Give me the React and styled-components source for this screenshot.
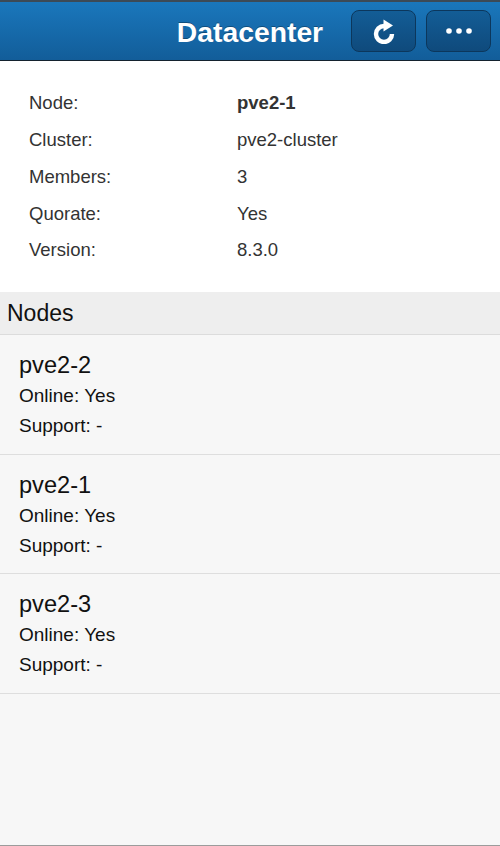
import React from "react";
import styled, { createGlobalStyle } from "styled-components";

const GlobalStyle = createGlobalStyle`
  html, body {
    margin: 0;
    padding: 0;
    background: #f7f7f7;
    font-family: "Liberation Sans", Arial, sans-serif;
    color: #1a1a1a;
  }
`;

const Page = styled.div`
  display: flex;
  flex-direction: column;
  height: 846px;
  width: 500px;
  overflow: hidden;
  box-sizing: border-box;
  border-bottom: 1px solid #9c9c9c;
`;

const Toolbar = styled.header`
  box-sizing: border-box;
  display: flex;
  align-items: flex-start;
  justify-content: flex-end;
  gap: 10px;
  height: 61px;
  padding: 8px 9px 0 0;
  position: relative;
  background: linear-gradient(#1a77bc, #125d99);
  border-top: 2px solid #3c4a57;
  border-bottom: 1px solid #14222e;
`;

const Title = styled.h1`
  position: absolute;
  left: 0;
  right: 0;
  top: 13px;
  margin: 0;
  text-align: center;
  font-size: 28.3px;
  line-height: 34px;
  font-weight: 700;
  color: #fff;
  text-shadow: 0 -1px 0 rgba(0, 0, 0, 0.3);
`;

const ToolButton = styled.button`
  box-sizing: border-box;
  display: flex;
  align-items: center;
  justify-content: center;
  width: 65px;
  height: 42px;
  padding: 0;
  border: 1px solid #0c375c;
  border-radius: 8px;
  background: linear-gradient(#135d96, #0f4a7c);
`;

const Info = styled.section`
  background: #fff;
  padding: 24px 29px 23.25px;
  display: grid;
  grid-template-columns: 208px 1fr;
  grid-auto-rows: 36.75px;
  align-items: center;
  font-size: 18.5px;
  color: #333;
`;

const Value = styled.span`
  font-weight: ${(p) => (p.$strong ? 700 : 400)};
`;

const SectionHeader = styled.div`
  box-sizing: border-box;
  height: 43px;
  padding-left: 7px;
  display: flex;
  align-items: center;
  background: #eee;
  border-bottom: 1px solid #dcdcdc;
  font-size: 23px;
  color: #111;
`;

const NodeItem = styled.div`
  box-sizing: border-box;
  height: 119.7px;
  padding: 15px 19px 0;
  border-bottom: 1px solid #dedede;
`;

const NodeName = styled.div`
  font-size: 23.6px;
  line-height: 30px;
  margin-bottom: 1px;
  color: #111;
`;

const NodeLine = styled.div`
  font-size: 19px;
  line-height: 30px;
  color: #111;
`;

const nodes = ["pve2-2", "pve2-1", "pve2-3"];

const info = [
  ["Node:", "pve2-1", true],
  ["Cluster:", "pve2-cluster"],
  ["Members:", "3"],
  ["Quorate:", "Yes"],
  ["Version:", "8.3.0"],
];

const RefreshIcon = () => (
  <svg width="24" height="26" viewBox="0 0 24 26">
    <path
      d="M12 8 A8 8 0 1 0 20 16"
      fill="none"
      stroke="#fff"
      strokeWidth="4.4"
    />
    <path d="M11.5 1.5 L21 7.5 L11.5 13.5 Z" fill="#fff" />
  </svg>
);

const DotsIcon = () => (
  <svg width="26" height="6" viewBox="0 0 26 6">
    <circle cx="3" cy="3" r="2.8" fill="#fff" />
    <circle cx="13" cy="3" r="2.8" fill="#fff" />
    <circle cx="23" cy="3" r="2.8" fill="#fff" />
  </svg>
);

export default function App() {
  return (
    <Page>
      <GlobalStyle />
      <Toolbar>
        <Title>Datacenter</Title>
        <ToolButton>
          <RefreshIcon />
        </ToolButton>
        <ToolButton>
          <DotsIcon />
        </ToolButton>
      </Toolbar>
      <Info>
        {info.map(([label, value, strong]) => (
          <React.Fragment key={label}>
            <span>{label}</span>
            <Value $strong={strong}>{value}</Value>
          </React.Fragment>
        ))}
      </Info>
      <SectionHeader>Nodes</SectionHeader>
      {nodes.map((n) => (
        <NodeItem key={n}>
          <NodeName>{n}</NodeName>
          <NodeLine>Online: Yes</NodeLine>
          <NodeLine>Support: -</NodeLine>
        </NodeItem>
      ))}
    </Page>
  );
}
